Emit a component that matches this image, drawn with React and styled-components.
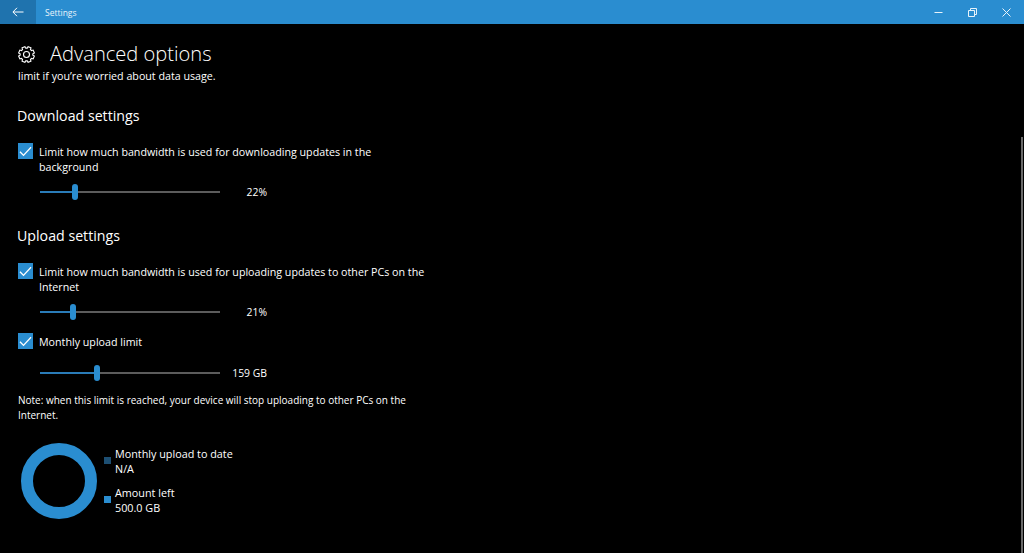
import styled, { createGlobalStyle } from "styled-components";

const Global = createGlobalStyle`
  html, body {
    margin: 0;
    background: #000;
  }
  body {
    font-family: "Open Sans", "Noto Sans", sans-serif;
    color: #fff;
    overflow: hidden;
  }
`;

const Page = styled.div`
  position: relative;
  width: 1024px;
  height: 553px;
  overflow: hidden;
  background: #000;
`;

const TitleBar = styled.header`
  display: flex;
  align-items: center;
  height: 24px;
  background: #2a8dd0;
`;

const BackButton = styled.div`
  display: flex;
  align-items: center;
  justify-content: center;
  width: 36px;
  height: 24px;
  background: #1f73ae;
`;

const AppName = styled.span`
  margin-left: 9px;
  font-size: 8.5px;
  color: #e8f3fa;
`;

const WindowControls = styled.div`
  display: flex;
  margin-left: auto;
  margin-right: 1px;
`;

const WindowButton = styled.div`
  display: flex;
  align-items: center;
  justify-content: center;
  width: 34px;
  height: 24px;
`;

const Content = styled.main`
  display: flex;
  flex-direction: column;
  padding-left: 18px;
`;

const PageHead = styled.div`
  display: flex;
  align-items: center;
  gap: 15px;
  height: 30px;
  margin-top: 15px;
`;

const PageTitle = styled.h1`
  margin: 0;
  font-size: 20.1px;
  font-weight: 300;
  line-height: 30px;
`;

const Body = styled.p`
  margin: 0;
  font-size: 10.7px;
  line-height: 15px;
  color: #fff;
`;

const Heading = styled.h2`
  margin: ${(p) => p.$top}px 0 0 -1px;
  font-size: 14.2px;
  font-weight: 400;
  line-height: 20px;
`;

const CheckRow = styled.div`
  display: flex;
  gap: 6px;
  margin-top: ${(p) => p.$top}px;
  width: 412px;
`;

const Box = styled.div`
  flex: none;
  display: flex;
  align-items: center;
  justify-content: center;
  width: 15px;
  height: 16px;
  background: #2a8dd0;
`;

const CheckText = styled.div`
  padding-top: 2px;
  font-size: 10.7px;
  line-height: 15px;
  color: #fff;
`;

const SliderRow = styled.div`
  display: flex;
  align-items: center;
  height: 16px;
  margin-top: ${(p) => p.$top}px;
  margin-left: 22px;
`;

const Track = styled.div`
  display: flex;
  align-items: center;
  width: 180px;
`;

const Filled = styled.div`
  flex: none;
  width: ${(p) => p.$width}px;
  height: 2px;
  background: #2a7cb8;
`;

const Rest = styled.div`
  flex: 1;
  height: 2px;
  background: #5c5c5c;
`;

const Thumb = styled.div`
  flex: none;
  width: 6px;
  height: 16px;
  border-radius: 3px;
  background: #2a8dd0;
`;

const Value = styled.div`
  width: 47px;
  text-align: right;
  font-size: 10.4px;
  color: #fff;
`;

const Note = styled(Body)`
  width: 420px;
  margin-top: 12px;
  font-size: 10px;
  line-height: 14.5px;
`;

const UsageRow = styled.div`
  display: flex;
  align-items: center;
  gap: 7px;
  margin-top: 21px;
  margin-left: 3px;
`;

const Donut = styled.div`
  box-sizing: border-box;
  width: 76px;
  height: 76px;
  border: 12px solid #2a8dd0;
  border-radius: 50%;
`;

const Legend = styled.div`
  display: flex;
  flex-direction: column;
  gap: 9px;
  padding-bottom: 2px;
`;

const LegendItem = styled.div`
  display: flex;
  align-items: center;
  gap: 4px;
`;

const LegendText = styled(Body)`
  font-size: 10.8px;
`;

const Swatch = styled.div`
  width: 7px;
  height: 7px;
  background: ${(p) => p.$color};
`;

const Scrollbar = styled.div`
  position: absolute;
  right: 1px;
  top: 137px;
  bottom: 0;
  width: 2px;
  background: #6a6a6a;
`;

const BackIcon = () => (
  <svg width="12" height="10" viewBox="0 0 12 10" fill="none" stroke="#fff" strokeWidth="1">
    <path d="M11.5 5H1M5 .8 .9 5 5 9.2" />
  </svg>
);

const MinimizeIcon = () => (
  <svg width="9" height="9" viewBox="0 0 9 9" fill="none" stroke="#e8f3fa" strokeWidth="1">
    <path d="M.5 4.5h8" />
  </svg>
);

const RestoreIcon = () => (
  <svg width="9" height="9" viewBox="0 0 9 9" fill="none" stroke="#e8f3fa" strokeWidth="1">
    <path d="M.5 2.5h6v6h-6zM2.5 2.5V.5h6v6h-2" />
  </svg>
);

const CloseIcon = () => (
  <svg width="9" height="9" viewBox="0 0 9 9" fill="none" stroke="#e8f3fa" strokeWidth="1">
    <path d="M.5.5l8 8M8.5.5l-8 8" />
  </svg>
);

const CheckIcon = () => (
  <svg width="13" height="11" viewBox="0 0 13 11" fill="none" stroke="#fff" strokeWidth="1.3">
    <path d="M1 5.8 4.5 9.4 12 1.2" />
  </svg>
);

// toothed outline gear, same as the Settings glyph
const gearPath = () => {
  const pts = [];
  for (let i = 0; i < 8; i++) {
    const a = (i * Math.PI) / 4;
    const step = Math.PI / 8;
    [
      [a - step * 0.5, 8],
      [a - step * 0.3, 6.4],
      [a + step * 0.3, 6.4],
      [a + step * 0.5, 8],
    ].forEach(([t, r]) => pts.push(`${(8.5 + r * Math.sin(t)).toFixed(2)} ${(8.5 - r * Math.cos(t)).toFixed(2)}`));
  }
  return `M${pts.join("L")}Z`;
};

const GearIcon = () => (
  <svg width="17" height="17" viewBox="0 0 17 17" fill="none" stroke="#fff" strokeWidth="1.1">
    <path d={gearPath()} />
    <circle cx="8.5" cy="8.5" r="3" />
  </svg>
);

const Slider = ({ fill, value, top }) => (
  <SliderRow $top={top}>
    <Track>
      <Filled $width={fill} />
      <Thumb />
      <Rest />
    </Track>
    <Value>{value}</Value>
  </SliderRow>
);

const Check = ({ top, children }) => (
  <CheckRow $top={top}>
    <Box>
      <CheckIcon />
    </Box>
    <CheckText>{children}</CheckText>
  </CheckRow>
);

export default function App() {
  return (
    <Page>
      <Global />
      <TitleBar>
        <BackButton>
          <BackIcon />
        </BackButton>
        <AppName>Settings</AppName>
        <WindowControls>
          <WindowButton>
            <MinimizeIcon />
          </WindowButton>
          <WindowButton>
            <RestoreIcon />
          </WindowButton>
          <WindowButton>
            <CloseIcon />
          </WindowButton>
        </WindowControls>
      </TitleBar>
      <Content>
        <PageHead>
          <GearIcon />
          <PageTitle>Advanced options</PageTitle>
        </PageHead>
        <Body>limit if you’re worried about data usage.</Body>

        <Heading $top={22}>Download settings</Heading>
        <Check top={17}>
          Limit how much bandwidth is used for downloading updates in the background
        </Check>
        <Slider fill={32} value="22%" top={9} />

        <Heading $top={26}>Upload settings</Heading>
        <Check top={17}>
          Limit how much bandwidth is used for uploading updates to other PCs on the Internet
        </Check>
        <Slider fill={30} value="21%" top={9} />
        <Check top={13}>Monthly upload limit</Check>
        <Slider fill={54} value="159 GB" top={15} />

        <Note>
          Note: when this limit is reached, your device will stop uploading to other PCs on the Internet.
        </Note>

        <UsageRow>
          <Donut />
          <Legend>
            <LegendItem>
              <Swatch $color="#1d4f73" />
              <LegendText>
                Monthly upload to date
                <br />
                N/A
              </LegendText>
            </LegendItem>
            <LegendItem>
              <Swatch $color="#2a8dd0" />
              <LegendText>
                Amount left
                <br />
                500.0 GB
              </LegendText>
            </LegendItem>
          </Legend>
        </UsageRow>
      </Content>
      <Scrollbar />
    </Page>
  );
}
